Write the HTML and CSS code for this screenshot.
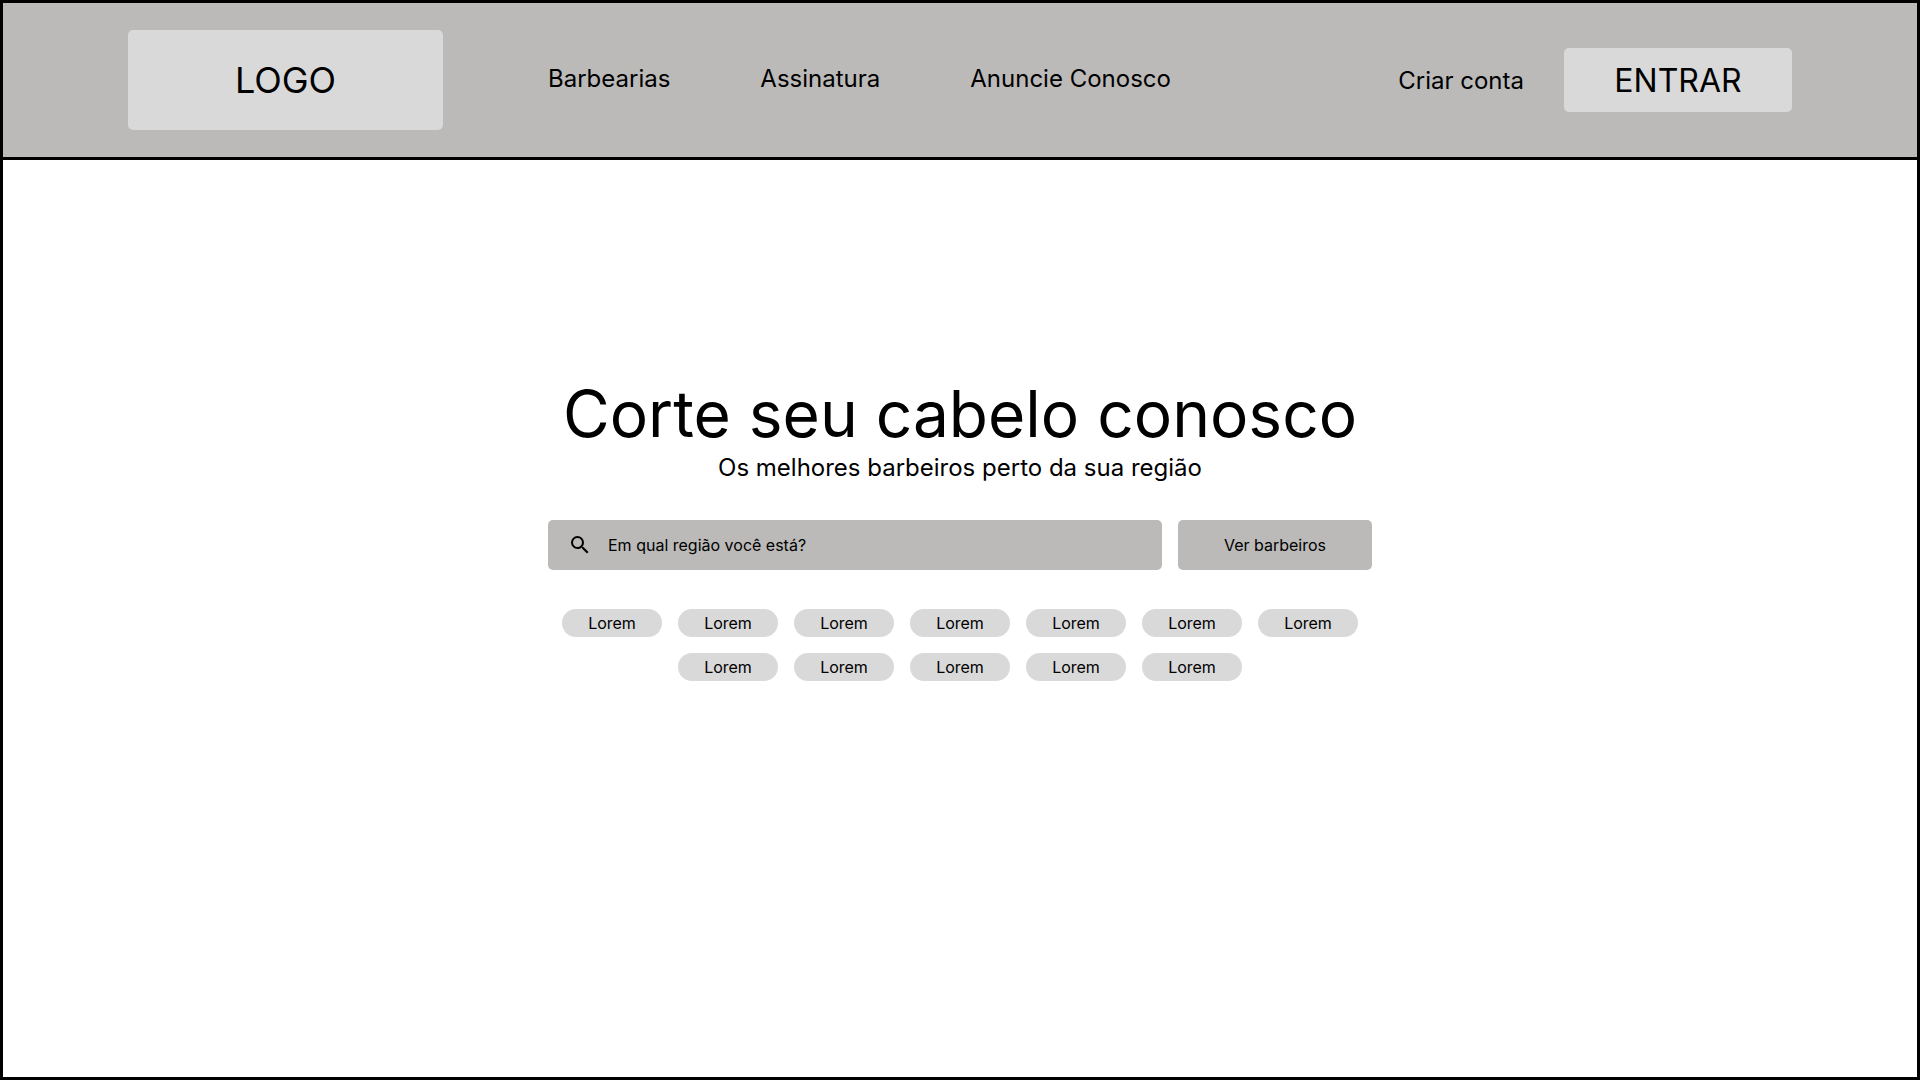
FILE: index.html
```
<!DOCTYPE html>
<html lang="pt-BR">
<head>
<meta charset="utf-8">
<meta name="viewport" content="width=device-width, initial-scale=1">
<title>Corte seu cabelo conosco</title>
<link rel="stylesheet" href="styles.css">
</head>
<body>
<div class="page">
  <header class="header">
    <a class="logo" href="#">LOGO</a>
    <nav class="nav">
      <a href="#">Barbearias</a>
      <a href="#">Assinatura</a>
      <a href="#">Anuncie Conosco</a>
    </nav>
    <div class="account">
      <a href="#">Criar conta</a>
      <button class="login" type="button">ENTRAR</button>
    </div>
  </header>
  <main class="hero">
    <h1 class="title">Corte seu cabelo conosco</h1>
    <p class="subtitle">Os melhores barbeiros perto da sua região</p>
    <form class="search">
      <label class="field">
        <svg class="icon" viewBox="0 0 24 24" aria-hidden="true"><path d="M15.5 14h-.79l-.28-.27A6.471 6.471 0 0 0 16 9.5 6.5 6.5 0 1 0 9.5 16c1.61 0 3.09-.59 4.23-1.57l.27.28v.79l5 4.99L20.490 19l-4.990-5zm-6 0C7.010 14 5 11.990 5 9.500S7.010 5 9.500 5 14 7.010 14 9.500 11.990 14 9.500 14z"/></svg>
        <input class="input" type="text" placeholder="Em qual região você está?" aria-label="Em qual região você está?">
      </label>
      <button class="submit" type="button">Ver barbeiros</button>
    </form>
    <div class="tags">
      <button class="tag" type="button">Lorem</button>
      <button class="tag" type="button">Lorem</button>
      <button class="tag" type="button">Lorem</button>
      <button class="tag" type="button">Lorem</button>
      <button class="tag" type="button">Lorem</button>
      <button class="tag" type="button">Lorem</button>
      <button class="tag" type="button">Lorem</button>
      <button class="tag" type="button">Lorem</button>
      <button class="tag" type="button">Lorem</button>
      <button class="tag" type="button">Lorem</button>
      <button class="tag" type="button">Lorem</button>
      <button class="tag" type="button">Lorem</button>
    </div>
  </main>
</div>
</body>
</html>
```
FILE: styles.css
```
* { box-sizing: border-box; }
body { margin: 0; background: #fff; color: #000; font-family: Inter, "Liberation Sans", sans-serif; }
a { color: inherit; text-decoration: none; }
button, input { border: 0; color: inherit; font-family: inherit; }
button { padding: 0; cursor: pointer; }
.page { min-height: 100vh; border: 3px solid #000; }
.header { display: flex; align-items: center; padding: 27px 125px; border-bottom: 3px solid #000; background: #bbbab8; font-size: 24px; line-height: 29px; }
.logo { display: flex; align-items: center; justify-content: center; width: 315px; height: 100px; border-radius: 5px; background: #d9d9d9; font-size: 36px; }
.nav { display: flex; gap: 90px; margin-left: 105px; padding-bottom: 3px; }
.account { display: flex; align-items: center; gap: 40px; margin-left: auto; }
.login { width: 228px; height: 64px; border-radius: 5px; background: #d9d9d9; font-size: 32px; }
.hero { width: 824px; max-width: 100%; margin: 0 auto; padding-top: 215px; text-align: center; }
.title { margin: 0; font-size: 64px; font-weight: 400; line-height: 78px; }
.subtitle { margin: 0; font-size: 24px; line-height: 29px; }
.search { display: flex; gap: 16px; margin-top: 38px; }
.field { display: flex; flex: 1; align-items: center; gap: 16px; height: 50px; padding: 0 20px; border-radius: 5px; background: #bbbab8; }
.icon { width: 24px; height: 24px; }
.input { flex: 1; padding: 0; outline: 0; background: none; font-size: 16px; }
.input::placeholder { color: #000; opacity: 1; }
.submit { width: 194px; border-radius: 5px; background: #bbbab8; font-size: 16px; }
.tags { display: flex; flex-wrap: wrap; justify-content: center; gap: 16px; margin-top: 39px; }
.tag { width: 100px; height: 28px; border-radius: 14px; background: #d9d9d9; font-size: 16px; }
```
